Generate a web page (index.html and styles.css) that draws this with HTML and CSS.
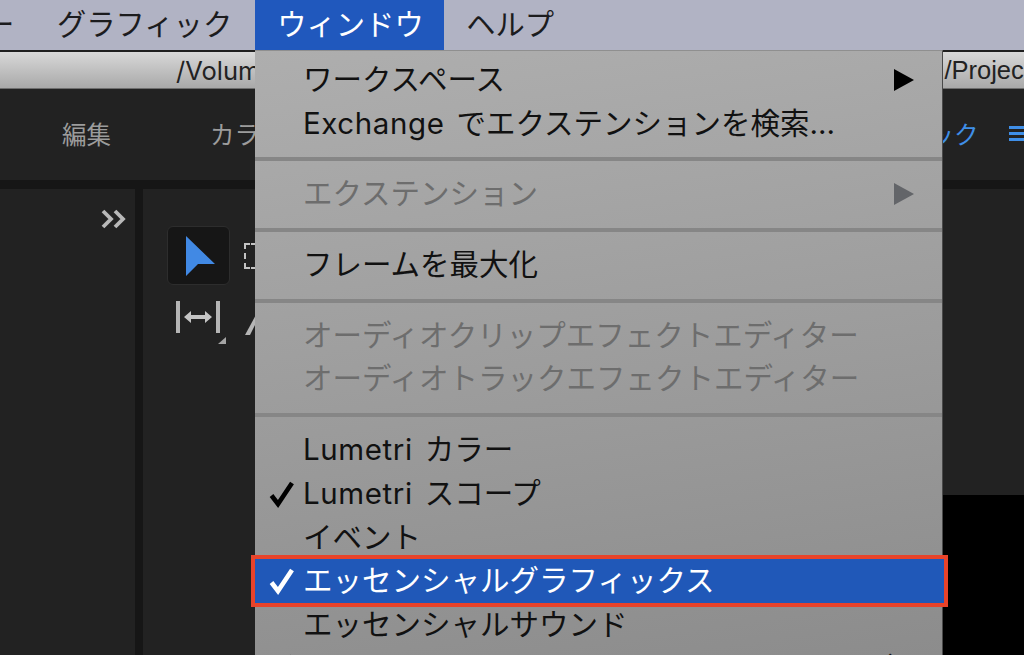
FILE: index.html
```html
<!DOCTYPE html>
<html lang="ja">

<head>
    <meta charset="UTF-8">
    <title>ウィンドウ メニュー</title>
    <link rel="stylesheet" href="styles.css">
</head>

<body>
    <div class="menubar">
        <span class="menubar-item cut">ー</span>
        <span class="menubar-item graphic">グラフィック</span>
        <span class="menubar-item active">ウィンドウ</span>
        <span class="menubar-item">ヘルプ</span>
    </div>

    <div class="app">
        <div class="titlebar">
            <span class="path-left">/Volum</span>
            <span class="path-right">/Projec</span>
        </div>
        <div class="tabs">
            <span class="tab">編集</span>
            <span class="tab tab-color">カラー</span>
            <span class="tab-active">ック</span>
            <span class="tab-icon"></span>
        </div>
        <div class="panels">
            <div class="panel-left">
                <svg class="chevrons" width="26" height="20" viewBox="0 0 26 20">
                    <path d="M3 2l8 8-8 8M15 2l8 8-8 8" fill="none" stroke="#b9b9b9" stroke-width="3.8" />
                </svg>
            </div>
            <div class="panel-tools">
                <div class="tool-row">
                    <div class="tool-selected">
                        <svg width="32" height="42" viewBox="0 0 32 42">
                            <path d="M2 1L31 29 14 29 2 41z" fill="#4189e4" />
                        </svg>
                    </div>
                    <div class="tool-marquee"></div>
                </div>
                <div class="tool-row tool-row-2">
                    <svg width="54" height="44" viewBox="0 0 54 44">
                        <path d="M3 0h4v32H3zM43 0h4v32h-4z" fill="#b5b5b5" />
                        <path d="M11 16l7-6v4h14v-4l7 6-7 6v-4H18v4z" fill="#c4c4c4" />
                        <path d="M53 36v7h-8z" fill="#a5a5a5" />
                    </svg>
                    <svg class="tool-pen" width="12" height="26" viewBox="0 0 12 26">
                        <path d="M0 24L12 2v8L5 24z" fill="#b5b5b5" />
                    </svg>
                </div>
            </div>
            <div class="panel-right">
                <div class="panel-right-top"></div>
                <div class="panel-right-black"></div>
            </div>
        </div>
    </div>

    <div class="menu">
        <div class="menu-group">
            <div class="menu-item">ワークスペース<span class="arrow"></span></div>
            <div class="menu-item"><span class="latin">Exchange </span>でエクステンションを検索...</div>
        </div>
        <div class="menu-group">
            <div class="menu-item disabled">エクステンション<span class="arrow"></span></div>
        </div>
        <div class="menu-group">
            <div class="menu-item">フレームを最大化</div>
        </div>
        <div class="menu-group">
            <div class="menu-item disabled">オーディオクリップエフェクトエディター</div>
            <div class="menu-item disabled">オーディオトラックエフェクトエディター</div>
        </div>
        <div class="menu-group">
            <div class="menu-item"><span class="latin">Lumetri </span>カラー</div>
            <div class="menu-item">
                <svg class="check" width="28" height="28" viewBox="0 0 28 28">
                    <path d="M3.5 15.5l6.5 8.5L24 3" fill="none" stroke="currentColor" stroke-width="4.6" />
                </svg><span class="latin">Lumetri </span>スコープ
            </div>
            <div class="menu-item">イベント</div>
            <div class="menu-item selected">
                <svg class="check" width="28" height="28" viewBox="0 0 28 28">
                    <path d="M3.5 15.5l6.5 8.5L24 3" fill="none" stroke="currentColor" stroke-width="4.6" />
                </svg>エッセンシャルグラフィックス
            </div>
            <div class="menu-item">エッセンシャルサウンド</div>
            <div class="menu-item last-item">
                <svg class="check" width="28" height="28" viewBox="0 0 28 28">
                    <path d="M3.5 15.5l6.5 8.5L24 3" fill="none" stroke="currentColor" stroke-width="4.6" />
                </svg>エフェクト<span class="shortcut">⇧7</span>
            </div>
        </div>
    </div>
</body>

</html>
```
FILE: styles.css
```css
* {
    margin: 0;
    padding: 0;
    box-sizing: border-box;
    font-family: "Inter", "Noto Sans CJK JP", sans-serif;
}

html,
body {
    width: 1024px;
    height: 655px;
    overflow: hidden;
}

body {
    position: relative;
    background: #000;
}

.menubar {
    display: flex;
    height: 50px;
    background: #b1b3c4;
    font-size: 29.3px;
    color: #1c1c1e;
    overflow: hidden;
}

.menubar-item {
    display: block;
    height: 50px;
    line-height: 50px;
    padding: 0 22px;
    white-space: nowrap;
}

.cut {
    width: 34px;
    padding: 0;
    margin-left: -15px;
    margin-right: 15px;
}

.graphic {
    padding: 0 23px;
}

.active {
    width: 189px;
    padding: 0 0 0 22px;
    background: #2058bd;
    color: #fff;
}

.app {
    height: 605px;
    border-top: 2px solid #1f1f1f;
    display: flex;
    flex-direction: column;
}

.titlebar {
    height: 37px;
    background: linear-gradient(#d8d8d8, #a9a9a9);
    border-bottom: 1px solid #6e6e6e;
    font-family: "Liberation Sans", sans-serif;
    font-size: 25.5px;
    line-height: 37px;
    color: #222;
    display: flex;
    overflow: hidden;
}

.path-left {
    margin-left: 176px;
}

.path-right {
    margin-left: 684px;
    font-family: "Liberation Sans", sans-serif;
}

.tabs {
    height: 91px;
    padding-bottom: 3px;
    background: #222;
    display: flex;
    align-items: center;
    font-size: 24.5px;
    color: #9c9c9c;
    white-space: nowrap;
    overflow: hidden;
}

.tab {
    margin-left: 62px;
}

.tab-color {
    margin-left: 99px;
}

.tab-active {
    margin-left: 646px;
    color: #3f8fe8;
}

.tab-icon {
    flex: none;
    width: 17px;
    height: 15px;
    margin-left: 30px;
    border-top: 3px solid #3f8fe8;
    border-bottom: 3px solid #3f8fe8;
    background: linear-gradient(#3f8fe8, #3f8fe8) center / 100% 3px no-repeat;
}

.panels {
    flex: 1;
    display: flex;
    gap: 8px;
    padding-top: 9px;
    background: #161616;
}

.panel-left {
    width: 135px;
    background: #222;
    padding: 20px 0 0 100px;
}

.chevrons {
    display: block;
}

.panel-tools {
    width: 799px;
    background: #222;
    padding: 37px 0 0 24px;
}

.tool-row {
    display: flex;
    align-items: center;
    gap: 14px;
}

.tool-selected {
    width: 63px;
    height: 59px;
    background: #161616;
    border: 1px solid #2d2d2d;
    border-radius: 6px;
    padding: 8px 0 0 16px;
}

.tool-selected svg {
    display: block;
}

.tool-marquee {
    width: 20px;
    height: 26px;
    border: 2px dashed #c4c4c4;
}

.tool-row-2 {
    padding: 16px 0 0 6px;
    gap: 18px;
    align-items: flex-start;
}

.tool-pen {
    margin-top: 10px;
}

.panel-right {
    flex: 1;
    margin-left: -8px;
    display: flex;
    flex-direction: column;
}

.panel-right-top {
    height: 306px;
    background: #222;
}

.panel-right-black {
    flex: 1;
    background: #000;
}

/* menu lies over the window */
.menu {
    position: absolute;
    left: 255px;
    top: 50px;
    width: 688px;
    height: 605px;
    background: linear-gradient(172deg, #aeaeae, #8c8c8c);
    border-top: 1px solid #8f8f8f;
    border-right: 1px solid #4a4a4a;
    padding-top: 7px;
    font-size: 29.5px;
    color: #111;
}

.menu-group {
    border-bottom: 4px solid #868686;
    padding-bottom: 12px;
    margin-bottom: 11px;
}

.menu-group:last-child {
    border-bottom: 0;
    padding-bottom: 0;
    margin-bottom: 0;
}

.menu-item {
    position: relative;
    height: 43.7px;
    line-height: 42px;
    padding-left: 48px;
    white-space: nowrap;
}

.last-item {
    height: 8px;
}

.latin {
    letter-spacing: .6px;
    word-spacing: 3px;
}

.disabled {
    color: #6d6d6d;
}

.arrow {
    position: absolute;
    left: 639px;
    top: 11px;
    border-left: 20px solid #000;
    border-top: 11px solid transparent;
    border-bottom: 11px solid transparent;
}

.disabled .arrow {
    border-left-color: #636569;
}

.check {
    position: absolute;
    left: 13px;
    top: 8px;
    color: #000;
}

.last-item .check {
    top: 6px;
}

.shortcut {
    position: absolute;
    left: 620px;
    top: -2px;
}

.selected {
    z-index: 1;
    margin-right: -2px;
    background: #2058b8;
    color: #fff;
    outline: 4px solid #e8432a;
}

.selected .check {
    color: #fff;
}
```
